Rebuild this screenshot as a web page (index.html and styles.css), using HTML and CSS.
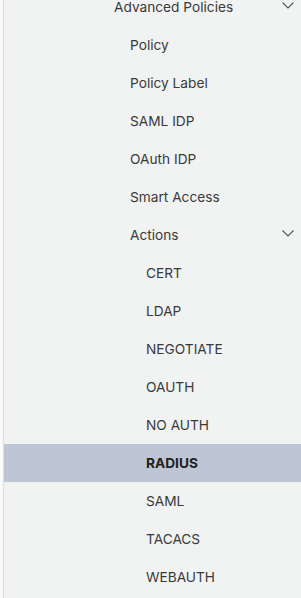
FILE: index.html
```html
<!DOCTYPE html>
<html lang="en">
<head>
    <meta charset="UTF-8">
    <meta name="viewport" content="width=device-width, initial-scale=1.0">
    <title>Menu</title>
    <link rel="stylesheet" href="styles.css">
</head>
<body>
    <nav class="side-nav">
        <div class="nav-item level-1">
            <span>Advanced Policies</span>
            <svg class="chevron" viewBox="0 0 12 7"><path d="M0.5 0.5 L6 6 L11.5 0.5"/></svg>
        </div>
        <div class="nav-item level-2"><span>Policy</span></div>
        <div class="nav-item level-2"><span>Policy Label</span></div>
        <div class="nav-item level-2"><span>SAML IDP</span></div>
        <div class="nav-item level-2"><span>OAuth IDP</span></div>
        <div class="nav-item level-2"><span>Smart Access</span></div>
        <div class="nav-item level-2">
            <span>Actions</span>
            <svg class="chevron" viewBox="0 0 12 7"><path d="M0.5 0.5 L6 6 L11.5 0.5"/></svg>
        </div>
        <div class="nav-item level-3"><span>CERT</span></div>
        <div class="nav-item level-3"><span>LDAP</span></div>
        <div class="nav-item level-3"><span>NEGOTIATE</span></div>
        <div class="nav-item level-3"><span>OAUTH</span></div>
        <div class="nav-item level-3"><span>NO AUTH</span></div>
        <div class="nav-item level-3 active"><span>RADIUS</span></div>
        <div class="nav-item level-3"><span>SAML</span></div>
        <div class="nav-item level-3"><span>TACACS</span></div>
        <div class="nav-item level-3"><span>WEBAUTH</span></div>
    </nav>
</body>
</html>
```
FILE: styles.css
```css
body {
    margin: 0;
    background-color: #fafafa;
    font-family: Inter, "Noto Sans", sans-serif;
    overflow: hidden;
}

.side-nav {
    margin-left: 3px;
    margin-top: -12px;
    border-left: 1px solid #dedede;
    background-color: #f1f2f2;
    min-height: 620px;
}

.nav-item {
    display: flex;
    align-items: center;
    justify-content: space-between;
    height: 38px;
    padding-right: 7px;
    font-size: 13.7px;
    color: #3a3a3a;
}

.nav-item span {
    margin-top: -1px;
}

.level-1 {
    padding-left: 110px;
}

.level-2 {
    padding-left: 126px;
}

.level-3 {
    padding-left: 142px;
}

/* Item selecionado */
.active {
    background-color: #bec6d5;
    font-weight: 700;
    color: #222;
}

.chevron {
    width: 12px;
    height: 7px;
    margin-bottom: 3px;
}

.chevron path {
    fill: none;
    stroke: #555;
    stroke-width: 1.1;
}
```
